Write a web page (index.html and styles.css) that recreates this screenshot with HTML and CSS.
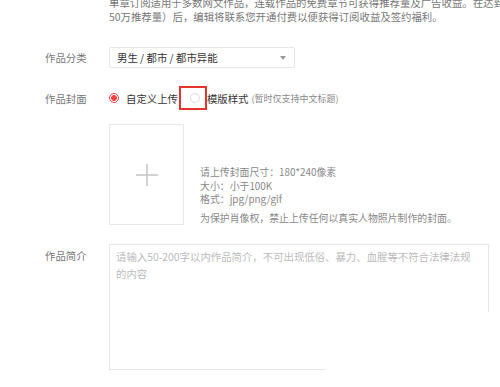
FILE: index.html
```html
<!DOCTYPE html>
<html lang="zh-CN">
<head>
  <meta charset="UTF-8">
  <meta name="viewport" content="width=device-width, initial-scale=1">
  <title>作品信息</title>
  <link rel="stylesheet" href="styles.css">
</head>
<body>
  <div class="form">
    <!-- 顶部说明 -->
    <p class="intro-note">单章订阅适用于多数网文作品，连载作品的免费章节可获得推荐量及广告收益。在达到一定标准（<br>50万推荐量）后，编辑将联系您开通付费以便获得订阅收益及签约福利。</p>

    <!-- 作品分类 -->
    <div class="row row-category">
      <label class="row-label">作品分类</label>
      <div class="select">
        <span class="select-value">男生 / 都市 / 都市异能</span>
        <span class="select-arrow"></span>
      </div>
    </div>

    <!-- 作品封面 -->
    <div class="row row-cover">
      <label class="row-label">作品封面</label>
      <div class="radios">
        <span class="radio checked"></span>
        <span class="radio-text">自定义上传</span>
        <span class="mark"><span class="radio"></span></span>
        <span class="radio-text">模版样式</span>
        <span class="radio-note">(暂时仅支持中文标题)</span>
      </div>
    </div>

    <div class="upload">
      <div class="upload-box">
        <svg width="24" height="24" viewBox="0 0 24 24">
          <line x1="12" y1="1" x2="12" y2="23" stroke="#c8c8c8" stroke-width="1.6"></line>
          <line x1="1" y1="12" x2="23" y2="12" stroke="#c8c8c8" stroke-width="1.6"></line>
        </svg>
      </div>
      <div class="upload-hints">
        <p>请上传封面尺寸：180*240像素</p>
        <p>大小：小于100K</p>
        <p>格式：jpg/png/gif</p>
        <p class="hint-last">为保护肖像权，禁止上传任何以真实人物照片制作的封面。</p>
      </div>
    </div>

    <!-- 作品简介 -->
    <div class="row row-desc">
      <label class="row-label">作品简介</label>
      <textarea class="desc" placeholder="请输入50-200字以内作品简介，不可出现低俗、暴力、血腥等不符合法律法规的内容"></textarea>
    </div>
  </div>
</body>
</html>
```

FILE: styles.css
```css
* {
  box-sizing: border-box;
}
body {
  margin: 0;
  background: #fff;
  font-family: "Noto Sans CJK SC", "Noto Sans", sans-serif;
  font-size: 10.4px;
  color: #333;
  overflow: hidden;
}
p {
  margin: 0;
}

.form {
  padding-left: 45px;
}

/* 顶部说明 */
.intro-note {
  margin: -4px 0 0 64px;
  line-height: 14px;
  color: #777;
  white-space: nowrap;
  height: 28px;
}

/* 行 */
.row {
  display: flex;
  align-items: center;
}
.row-label {
  width: 64px;
  flex: none;
  color: #777;
}

.row-category {
  margin-top: 23px;
}
.select {
  width: 186px;
  height: 21px;
  border: 1px solid #e6e6e6;
  border-radius: 2px;
  display: flex;
  align-items: center;
  justify-content: space-between;
  padding: 0 8px 0 7px;
}
.select-value {
  color: #333;
}
.select-arrow {
  width: 0;
  height: 0;
  border-left: 3px solid transparent;
  border-right: 3px solid transparent;
  border-top: 4px solid #999;
}

/* 封面 */
.row-cover {
  margin-top: 18px;
}
.radios {
  display: flex;
  align-items: center;
}
.radio {
  width: 10px;
  height: 10px;
  border-radius: 50%;
  border: 1px solid #ddd;
  background: #fff;
  display: inline-block;
}
.radio.checked {
  border-color: #f44;
  background: radial-gradient(circle, #f44 0 2.6px, #fff 3.2px);
  margin-right: 7px;
}
.radio-text {
  color: #333;
}
.mark {
  width: 28px;
  height: 24px;
  border: 2px solid #e8322c;
  display: flex;
  align-items: center;
  justify-content: center;
  padding-left: 4px;
  margin-left: 1px;
}
.radio-note {
  font-size: 9px;
  color: #888;
  margin-left: 3px;
}

.upload {
  display: flex;
  align-items: flex-end;
  margin: 14px 0 0 64px;
}
.upload-box {
  width: 75px;
  height: 101px;
  border: 1px solid #e8e8e8;
  display: flex;
  align-items: center;
  justify-content: center;
}
.upload-hints {
  margin-left: 16px;
  font-size: 9.9px;
  color: #888;
  line-height: 13.5px;
}
.hint-last {
  margin-top: 5px;
  white-space: nowrap;
}

/* 简介 */
.row-desc {
  align-items: flex-start;
  margin-top: 19px;
}
.row-desc .row-label {
  margin-top: 4px;
}
.desc {
  width: 380px;
  height: 126px;
  resize: none;
  border: none;
  border-top: 1px solid #e6e6e6;
  border-left: 1px solid #e6e6e6;
  background:
    linear-gradient(#e6e6e6, #e6e6e6) right top / 1px 67px no-repeat,
    linear-gradient(#e6e6e6, #e6e6e6) left bottom / 215px 1px no-repeat;
  padding: 3px 13px 3px 6px;
  font-family: "Noto Sans CJK SC", "Noto Sans", sans-serif;
  font-size: 10.4px;
  line-height: 17px;
  outline: none;
  margin: 0;
}
.desc::placeholder {
  color: #bbb;
}
```
